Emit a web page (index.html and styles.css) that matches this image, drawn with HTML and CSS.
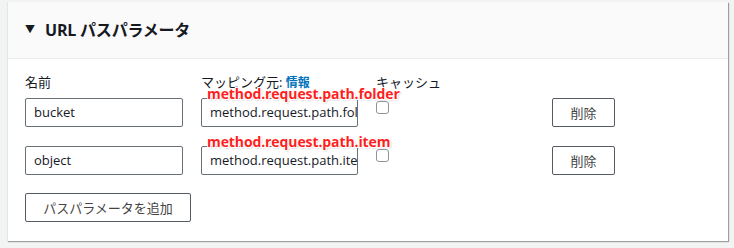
FILE: index.html
```html
<!DOCTYPE html>
<html lang="ja">
<head>
<meta charset="utf-8">
<link rel="stylesheet" href="styles.css">
</head>
<body>
<section class="card">
  <header class="card-head">
    <span class="caret">&#9660;</span>
    <h2 class="title">URL パスパラメータ</h2>
  </header>
  <div class="card-body">
    <div class="grid">
      <div class="label">名前</div>
      <div class="label">マッピング元: <a class="info">情報</a></div>
      <div class="label">キャッシュ</div>
      <div></div>

      <div class="cell"><div class="input">bucket</div></div>
      <div class="cell"><div class="input">method.request.path.folder</div><span class="note">method.request.path.folder</span></div>
      <div class="cell"><span class="check"></span></div>
      <div class="cell"><button class="btn del">削除</button></div>

      <div class="cell r2"><div class="input">object</div></div>
      <div class="cell r2"><div class="input">method.request.path.item</div><span class="note">method.request.path.item</span></div>
      <div class="cell r2"><span class="check"></span></div>
      <div class="cell r2"><button class="btn del">削除</button></div>
    </div>
    <button class="btn add">パスパラメータを追加</button>
  </div>
</section>
</body>
</html>
```
FILE: styles.css
```css
* { box-sizing: border-box; }
body {
  margin: 0;
  background: #f2f3f3;
  font-family: "Open Sans", "Noto Sans CJK JP", sans-serif;
  color: #16191f;
  width: 734px;
  height: 248px;
  overflow: hidden;
}
.card {
  margin: 2px 0 0 7px;
  width: 721px;
  height: 239px;
  background: #fff;
  border-left: 1px solid #e4e6e6;
  box-shadow: 1px 1px 1px 0 rgba(0,0,0,0.35);
}
.card-head {
  height: 57px;
  background: #fafafa;
  border-bottom: 1px solid #eaeded;
  display: flex;
  align-items: center;
  padding-left: 17px;
  padding-bottom: 3px;
}
.caret {
  font-size: 10px;
  width: 20px;
  color: #16191f;
}
.title {
  margin: 0;
  font-size: 16px;
  font-weight: 700;
  letter-spacing: -0.2px;
}
.card-body {
  padding: 15px 0 0 17px;
}
.grid {
  display: grid;
  grid-template-columns: 158px 157px 158px 63px;
  column-gap: 18px;
  grid-template-rows: 24px 29px 48px;
}
.label {
  font-size: 13px;
  line-height: 16px;
  color: #16191f;
  align-self: start;
}
.info {
  color: #0073bb;
  font-weight: 700;
  font-size: 12px;
}
.cell {
  position: relative;
}
.r2 {
  margin-top: 19px;
}
.input {
  height: 29px;
  border: 1px solid #687078;
  border-radius: 2px;
  padding: 0 8px;
  font-size: 13px;
  line-height: 27px;
  white-space: nowrap;
  overflow: hidden;
  color: #16191f;
}
.note {
  position: absolute;
  left: 6px;
  top: -11px;
  font-family: "Open Sans", sans-serif;
  font-weight: 700;
  font-size: 14px;
  letter-spacing: -0.1px;
  line-height: 14px;
  color: #ff1f1f;
  white-space: nowrap;
  text-shadow: 1px 1px 0 #fff, -1px -1px 0 #fff, 1px -1px 0 #fff, -1px 1px 0 #fff, 1px 1px 2px #999;
  z-index: 2;
}
.check {
  display: block;
  width: 13px;
  height: 13px;
  margin-top: 3px;
  border: 1px solid #8d9499;
  border-radius: 3px;
  background: #fff;
}
.btn {
  font-family: "Noto Sans CJK JP", sans-serif;
  background: #fff;
  border: 1px solid #545b64;
  border-radius: 2px;
  color: #444;
  font-size: 13px;
  padding: 0;
  cursor: pointer;
}
.del {
  width: 63px;
  height: 29px;
}
.add {
  margin-top: 18px;
  width: 166px;
  height: 29px;
  font-size: 13px;
}
```
